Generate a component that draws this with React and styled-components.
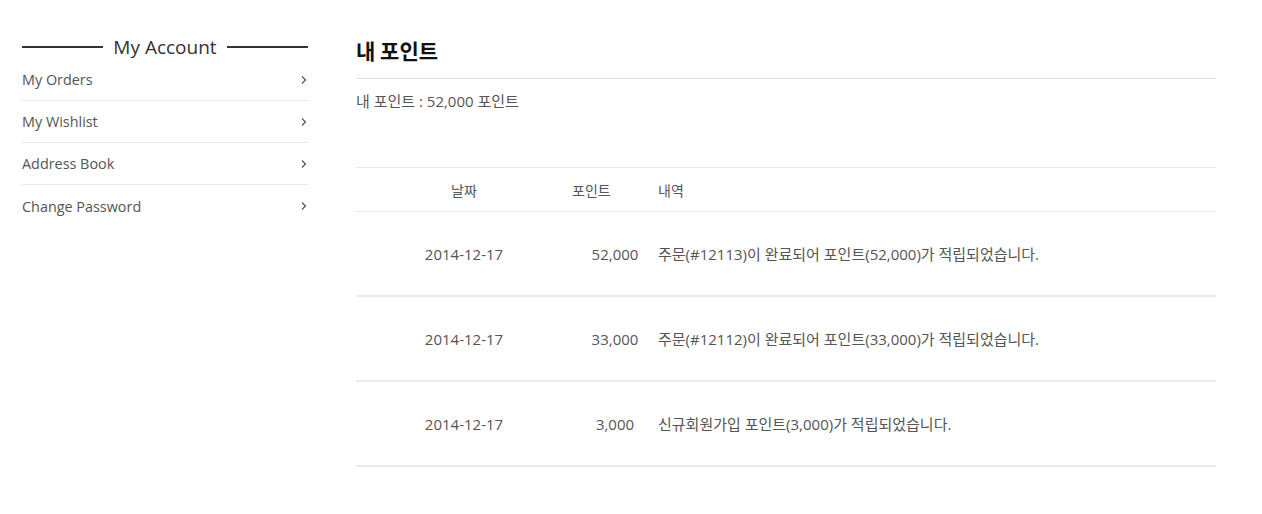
import React from 'react'
import styled, { createGlobalStyle } from 'styled-components'

const GlobalStyle = createGlobalStyle`
  body {
    margin: 0;
    background: #fff;
    font-family: "Open Sans", "Noto Sans CJK KR", sans-serif;
    color: #555;
  }
`

const menu = ['My Orders', 'My Wishlist', 'Address Book', 'Change Password']

const history = [
  { date: '2014-12-17', point: '52,000', text: '주문(#12113)이 완료되어 포인트(52,000)가 적립되었습니다.' },
  { date: '2014-12-17', point: '33,000', text: '주문(#12112)이 완료되어 포인트(33,000)가 적립되었습니다.' },
  { date: '2014-12-17', point: '3,000', text: '신규회원가입 포인트(3,000)가 적립되었습니다.' },
]

const Chevron = () => (
  <svg width="6" height="10" viewBox="0 0 6 10">
    <polyline points="1,1.5 4.5,5 1,8.5" fill="none" stroke="#555" strokeWidth="1.2" />
  </svg>
)

const App = () => {
  return (
    <Page>
      <GlobalStyle />
      <Sidebar>
        <SideTitle>
          <Rule />
          <span>My Account</span>
          <Rule />
        </SideTitle>
        <Menu>
          {menu.map((m) => (
            <MenuItem key={m}>
              {m}
              <Chevron />
            </MenuItem>
          ))}
        </Menu>
      </Sidebar>

      <Main>
        <Heading>내 포인트</Heading>
        <Summary>내 포인트 : 52,000 포인트</Summary>
        <Table>
          <HeadRow>
            <Cell align="center">날짜</Cell>
            <Cell>포인트</Cell>
            <Cell>내역</Cell>
          </HeadRow>
          {history.map((h, i) => (
            <Row key={i}>
              <Cell align="center">{h.date}</Cell>
              <Cell align="center">{h.point}</Cell>
              <Cell>{h.text}</Cell>
            </Row>
          ))}
        </Table>
      </Main>
    </Page>
  )
}

const Page = styled.div`
  display: flex;
  gap: 48px;
  padding: 34px 22px 40px 22px;
  width: 1262px;
  box-sizing: border-box;
`

const Sidebar = styled.aside`
  width: 286px;
  flex-shrink: 0;
`

const SideTitle = styled.div`
  display: flex;
  align-items: center;
  gap: 10px;
  height: 25px;
  font-size: 19px;
  color: #333;
  white-space: nowrap;
`

const Rule = styled.div`
  flex: 1;
  height: 2px;
  background: #333;
`

const Menu = styled.ul`
  list-style: none;
  margin: 0;
  padding: 0;
`

const MenuItem = styled.li`
  display: flex;
  align-items: center;
  justify-content: space-between;
  height: 42px;
  font-size: 14.4px;
  color: #555;
  border-bottom: 1px solid #e6e6e6;
  padding-right: 1px;
  box-sizing: border-box;

  &:last-child {
    border-bottom: none;
  }
`

const Main = styled.main`
  width: 860px;
`

const Heading = styled.h2`
  margin: 0;
  height: 45px;
  padding-top: 3px;
  box-sizing: border-box;
  line-height: 26px;
  font-size: 21px;
  font-weight: 700;
  color: #111;
  border-bottom: 1px solid #e3e3e3;
  font-family: "Noto Sans CJK KR", sans-serif;
`

const Summary = styled.p`
  margin: 0;
  padding-top: 11px;
  height: 89px;
  box-sizing: border-box;
  font-size: 15px;
  color: #555;
  border-bottom: 1px solid #e6e6e6;
`

const Table = styled.div`
  display: flex;
  flex-direction: column;
`

const HeadRow = styled.div`
  display: grid;
  grid-template-columns: 216px 86px 1fr;
  align-items: center;
  height: 44px;
  box-sizing: border-box;
  font-size: 14px;
  color: #555;
  border-bottom: 1px solid #e6e6e6;
`

const Row = styled(HeadRow)`
  height: 85px;
  font-size: 15px;
  border-bottom: 2px solid #ebebeb;
`

const Cell = styled.div`
  text-align: ${(p) => p.align || 'left'};
`

export default App
